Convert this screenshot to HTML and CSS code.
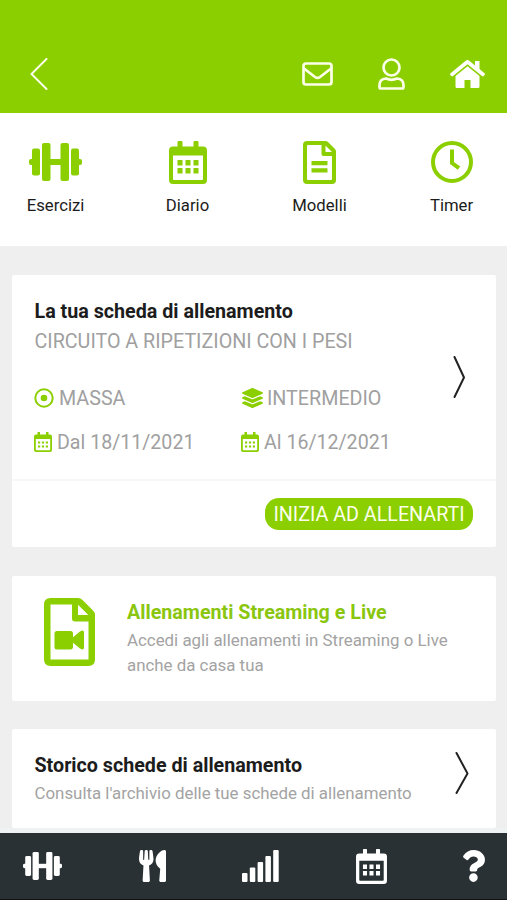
FILE: index.html
```html
<!DOCTYPE html>
<html lang="it">
<head>
<meta charset="utf-8">
<title>Allenamento</title>
<link rel="stylesheet" href="styles.css">
</head>
<body>
<svg class="sprite" aria-hidden="true">
  <symbol id="dumbbell" viewBox="0 0 53 38">
    <rect x="0" y="16" width="6" height="6" rx="2"/><rect x="47" y="16" width="6" height="6" rx="2"/>
    <rect x="3" y="5.5" width="8" height="27" rx="2"/><rect x="42" y="5.5" width="8" height="27" rx="2"/>
    <rect x="13" y="0" width="8.5" height="38" rx="2"/><rect x="31.5" y="0" width="8.5" height="38" rx="2"/>
    <rect x="20" y="16" width="13" height="6"/>
  </symbol>
  <symbol id="calendar" viewBox="0 0 38 43">
    <path fill-rule="evenodd" d="M9.5 0h3q1 0 1 1v4.500h11V1q0-1 1-1h3q1 0 1 1v4.500h4.500q4 0 4 4V39q0 4-4 4H4q-4 0-4-4V9.500q0-4 4-4h4.500V1q0-1 1-1zM4 14.500V38q0 1 1 1h28q1 0 1-1V14.500z"/>
    <path d="M8.500 19h5v5.500h-5zM16.500 19h5v5.500h-5zM24.500 19h5v5.500h-5zM8.500 27h5v5.500h-5zM16.500 27h5v5.500h-5zM24.500 27h5v5.500h-5z"/>
  </symbol>
  <symbol id="calendar-small" viewBox="0 0 18 20">
    <path fill-rule="evenodd" d="M3.500 0H6v2.500h6V0h2.500v2.500H16q2 0 2 2V18q0 2-2 2H2q-2 0-2-2V4.500q0-2 2-2h1.500zM1.800 7v10.500q0 .7.700.7h13q.7 0 .7-.7V7z"/>
    <path d="M4 9.500h2.200v2H4zM7.900 9.500h2.200v2H7.900zM11.800 9.500H14v2h-2.200zM4 13.500h2.200v2H4zM7.900 13.500h2.200v2H7.900zM11.800 13.500H14v2h-2.200z"/>
  </symbol>
</svg>
<div class="app">
  <header class="topbar">
    <svg class="back" width="18" height="32" viewBox="0 0 18 32"><path d="M16.500 1L1.500 16l15 15"/></svg>
    <div class="topbar-actions">
      <svg class="line" width="31" height="24" viewBox="0 0 31 24"><rect x="1.500" y="1.500" width="28" height="21" rx="2.500"/><path d="M2 6.500l11 8.500q2.500 1.800 5 0L29 6.500"/></svg>
      <svg class="line" width="27" height="32" viewBox="0 0 27 32"><circle cx="13.500" cy="9.500" r="8"/><path d="M8 20.500q5.500 2.600 11 0 6.500.3 6.500 7V29q0 1.500-1.500 1.500H3q-1.500 0-1.500-1.500v-1.500q0-6.700 6.500-7z"/></svg>
      <svg class="solid" width="35" height="28" viewBox="0 0 35 28"><path d="M17.500 6.200L29.500 16v10.500q0 1.500-1.500 1.500h-7.500v-8h-6v8H7q-1.500 0-1.500-1.500V16z"/><path d="M15.700.8q1.800-1.400 3.600 0L25 5.400V1h4.500v8l5 4.200q1 .8.100 1.800l-.9 1q-.8.800-1.700 0L17.500 4.300 3 16q-.9.800-1.700 0l-.9-1q-.8-1 .1-1.800z"/></svg>
    </div>
  </header>
  <nav class="menu">
    <a class="menu-item"><span class="menu-icon"><svg width="53" height="38"><use href="#dumbbell"/></svg></span>Esercizi</a>
    <a class="menu-item"><span class="menu-icon"><svg width="38" height="43"><use href="#calendar"/></svg></span>Diario</a>
    <a class="menu-item"><span class="menu-icon"><svg width="33" height="43" viewBox="0 0 33 43"><path fill-rule="evenodd" d="M4 0h18.500q1.500 0 2.500 1l7 7q1 1 1 2.500V39q0 4-4 4H4q-4 0-4-4V4q0-4 4-4zM4 5v33q0 1 1 1h23q1 0 1-1V15H20.500q-2 0-2-2V4H5Q4 4 4 5zM22.500 4.500V11H29z"/><path d="M8.500 20h16v4.300h-16zM8.500 27.300h16v4.300h-16z"/></svg></span>Modelli</a>
    <a class="menu-item"><span class="menu-icon"><svg class="clock" width="42" height="42" viewBox="0 0 42 42"><circle cx="21" cy="21" r="19"/><path d="M21 8.500V22l7 5.200"/></svg></span>Timer</a>
  </nav>
  <main class="content">
    <section class="card plan">
      <div class="plan-body">
        <div class="plan-info">
          <h2 class="title">La tua scheda di allenamento</h2>
          <p class="subtitle">CIRCUITO A RIPETIZIONI CON I PESI</p>
          <div class="facts">
            <span class="fact"><svg class="target" width="20" height="20" viewBox="0 0 20 20"><circle class="ring" cx="10" cy="10" r="8.700"/><circle cx="10" cy="10" r="3.300"/></svg>MASSA</span>
            <span class="fact"><svg class="layers" width="21" height="20" viewBox="0 0 512 512" preserveAspectRatio="none"><path d="M12.410 148.020l232.940 105.670c6.800 3.090 14.490 3.090 21.290 0l232.940-105.670c16.550-7.510 16.550-32.520 0-40.030L266.650 2.310a25.607 25.607 0 0 0-21.290 0L12.410 107.980c-16.550 7.510-16.550 32.530 0 40.040zm487.180 88.280l-58.090-26.330-161.640 73.270c-7.560 3.430-15.590 5.170-23.860 5.170s-16.290-1.740-23.860-5.170L70.510 209.970l-58.100 26.330c-16.550 7.500-16.550 32.500 0 40l232.940 105.590c6.800 3.080 14.490 3.080 21.290 0L499.590 276.300c16.550-7.500 16.550-32.500 0-40zm0 127.800l-57.870-26.230-161.860 73.370c-7.560 3.430-15.590 5.170-23.860 5.170s-16.290-1.740-23.860-5.170L70.290 337.870 12.410 364.100c-16.550 7.500-16.550 32.500 0 40l232.940 105.590c6.800 3.080 14.490 3.080 21.290 0L499.590 404.100c16.550-7.500 16.550-32.500 0-40z"/></svg>INTERMEDIO</span>
            <span class="fact date"><svg width="18" height="20"><use href="#calendar-small"/></svg>Dal 18/11/2021</span>
            <span class="fact date"><svg width="18" height="20"><use href="#calendar-small"/></svg>Al 16/12/2021</span>
          </div>
        </div>
        <svg class="chevron" width="14" height="44" viewBox="0 0 14 44"><path d="M1.500 2L11 22.500 1.500 42"/></svg>
      </div>
      <div class="plan-footer"><button class="start">INIZIA AD ALLENARTI</button></div>
    </section>
    <section class="card streaming">
      <svg class="video" width="51" height="68" viewBox="0 0 51 68"><path fill-rule="evenodd" d="M6.500 0H34q2.500 0 4.500 2L49 12.500q2 2 2 4.500v44.500q0 6.500-6.500 6.500h-38Q0 68 0 61.500v-55Q0 0 6.500 0zM6.500 6.500v55h38V23.500H31q-3 0-3-3v-14zM34 6.700V17h10.300z"/><path d="M13 33h13.500q2.500 0 2.500 2.500v3.700l7-5.700q4-2.500 4 1v15q0 3.500-4 1l-7-5.700v4q0 2.700-2.500 2.700H13q-2.500 0-2.500-2.500V35.500Q10.500 33 13 33z"/></svg>
      <div>
        <h2 class="title accent">Allenamenti Streaming e Live</h2>
        <p class="note">Accedi agli allenamenti in Streaming o Live<br>anche da casa tua</p>
      </div>
    </section>
    <section class="card history">
      <div>
        <h2 class="title">Storico schede di allenamento</h2>
        <p class="note">Consulta l'archivio delle tue schede di allenamento</p>
      </div>
      <svg class="chevron" width="14" height="44" viewBox="0 0 14 44"><path d="M1.500 2L12.500 22.500l-11 19.500"/></svg>
    </section>
  </main>
  <footer class="tabbar">
    <svg width="39" height="28"><use href="#dumbbell"/></svg>
    <svg width="27" height="32" viewBox="0 0 416 512" preserveAspectRatio="none"><path d="M207.900 15.200c.8 4.700 16.100 94.500 16.100 128.800 0 52.300-27.800 89.600-68.900 104.600L168 486.700c.7 13.700-10.200 25.300-24 25.300H80c-13.700 0-24.700-11.500-24-25.300l12.900-238.100C27.700 233.600 0 196.200 0 144 0 109.600 15.300 19.900 16.100 15.200 19.300-5.100 61.400-5.400 64 16.300v141.200c1.300 3.400 15.100 3.200 16 0 1.400-25.300 7.900-139.200 8-141.800 3.300-20.800 44.700-20.800 47.900 0 .2 2.700 6.600 116.500 8 141.800.9 3.200 14.800 3.400 16 0V16.300c2.600-21.600 44.800-21.400 47.900-1.100zm119.200 285.700l-15 185.100c-1.200 14 9.900 26 23.900 26h56c13.300 0 24-10.700 24-24V24c0-13.200-10.700-24-24-24-82.500 0-221.400 178.500-64.900 300.900z"/></svg>
    <svg width="37" height="32" viewBox="0 0 37 32"><rect x="0" y="23" width="5.500" height="9" rx="1"/><rect x="7.800" y="17.500" width="5.500" height="14.500" rx="1"/><rect x="15.600" y="12" width="5.500" height="20" rx="1"/><rect x="23.400" y="6" width="5.500" height="26" rx="1"/><rect x="31.200" y="0" width="5.500" height="32" rx="1"/></svg>
    <svg width="31" height="35"><use href="#calendar"/></svg>
    <svg width="22" height="32" viewBox="24 0 354 512"><path d="M202.021 0C122.202 0 70.503 32.703 29.914 91.026c-7.363 10.580-5.093 25.086 5.178 32.874l43.138 32.709c10.373 7.865 25.132 6.026 33.253-4.148 25.049-31.381 43.630-49.449 82.757-49.449 30.764 0 68.816 19.799 68.816 49.631 0 22.552-18.617 34.134-48.993 51.164-35.423 19.860-82.299 44.576-82.299 106.405V320c0 13.255 10.745 24 24 24h72.471c13.255 0 24-10.745 24-24v-5.773c0-42.860 125.268-44.645 125.268-160.627C377.504 66.256 286.902 0 202.021 0zM192 373.459c-38.196 0-69.271 31.075-69.271 69.271 0 38.195 31.075 69.270 69.271 69.270s69.271-31.075 69.271-69.271-31.075-69.270-69.271-69.270z"/></svg>
  </footer>
</div>
</body>
</html>
```
FILE: styles.css
```css
* { box-sizing: border-box; }
body { margin: 0; font-family: Roboto, sans-serif; background: #efefef; color: #1c1c1c; }
h2, p { margin: 0; }
svg { display: block; flex: none; fill: currentColor; }
.sprite { display: none; }
.app { height: 900px; display: flex; flex-direction: column; overflow: hidden; }

.topbar { height: 113px; padding: 34px 22px 0 30px; background: #8ccf00; color: #fbffe9; display: flex; align-items: center; justify-content: space-between; flex: none; }
.topbar-actions { display: flex; align-items: center; gap: 45px; }
.back { fill: none; stroke: currentColor; stroke-width: 2; stroke-linecap: round; stroke-linejoin: round; }
.line { fill: none; stroke: currentColor; stroke-width: 2.700; stroke-linejoin: round; }
.solid { color: #fff; }

.menu { height: 133px; padding: 25px 25px 0; background: #fff; display: flex; justify-content: space-between; flex: none; }
.menu-item { width: 61px; display: flex; flex-direction: column; align-items: center; font-size: 16.700px; line-height: 20px; }
.menu-icon { height: 48px; margin-bottom: 10px; display: flex; align-items: center; color: #8ccf00; }
.clock { fill: none; stroke: currentColor; stroke-width: 4; }

.content { flex: 1; min-height: 0; padding: 29px 11px 5px 12px; display: flex; flex-direction: column; gap: 28.500px; }
.card { background: #fff; border-radius: 2px; flex: none; }
.title { font-size: 19.700px; line-height: 26px; font-weight: 700; white-space: nowrap; }
.accent { color: #8ac60f; }
.chevron { fill: none; stroke: #222; stroke-width: 2; stroke-linecap: round; stroke-linejoin: round; }

.plan { height: 272px; }
.plan-body { height: 206px; padding: 24px 29px 0 22.500px; display: flex; justify-content: space-between; border-bottom: 2px solid #f7f7f7; }
.plan-body .chevron { margin-top: 56px; }
.subtitle { margin-top: 3px; font-size: 19.700px; line-height: 28px; color: #a0a0a0; white-space: nowrap; }
.facts { margin-top: 29px; display: grid; grid-template-columns: 207px auto; row-gap: 16px; }
.fact { display: flex; align-items: center; gap: 5px; font-size: 19.700px; line-height: 28px; color: #a0a0a0; white-space: nowrap; }
.date { font-size: 19.600px; }
.date svg { margin-left: -.5px; }
.fact svg { margin-bottom: 2px; }
.fact svg, .video { color: #8ccf00; }
.target { margin-left: -.5px; }
.layers { margin-right: -.5px; }
.ring { fill: none; stroke: currentColor; stroke-width: 2; }
.plan-footer { padding: 17px 23px 0; display: flex; justify-content: flex-end; }
.start { width: 208px; height: 32px; padding: 0; border: 0; border-radius: 14px; background: #8ccf00; color: #fbffe9; font: 19.700px/31px Roboto, sans-serif; white-space: nowrap; }

.streaming { height: 125px; padding: 23px 20px 0 32px; display: flex; gap: 32px; }
.video { margin-top: -1px; }
.streaming .title { margin: 1px 0 2px; }
.note { color: #a3a3a3; font-size: 16.870px; line-height: 25px; white-space: nowrap; }
.history { height: 99px; padding: 24px 27px 0 22.500px; display: flex; justify-content: space-between; }
.history .note { margin-top: 2px; }
.history .chevron { margin-top: -2px; }

.tabbar { height: 72px; padding: 0 22px 0 23px; border-top: 5px solid #eef2f2; border-bottom: 1px solid #111; background: #2a3134; color: #fff; display: flex; align-items: center; justify-content: space-between; flex: none; }
```
